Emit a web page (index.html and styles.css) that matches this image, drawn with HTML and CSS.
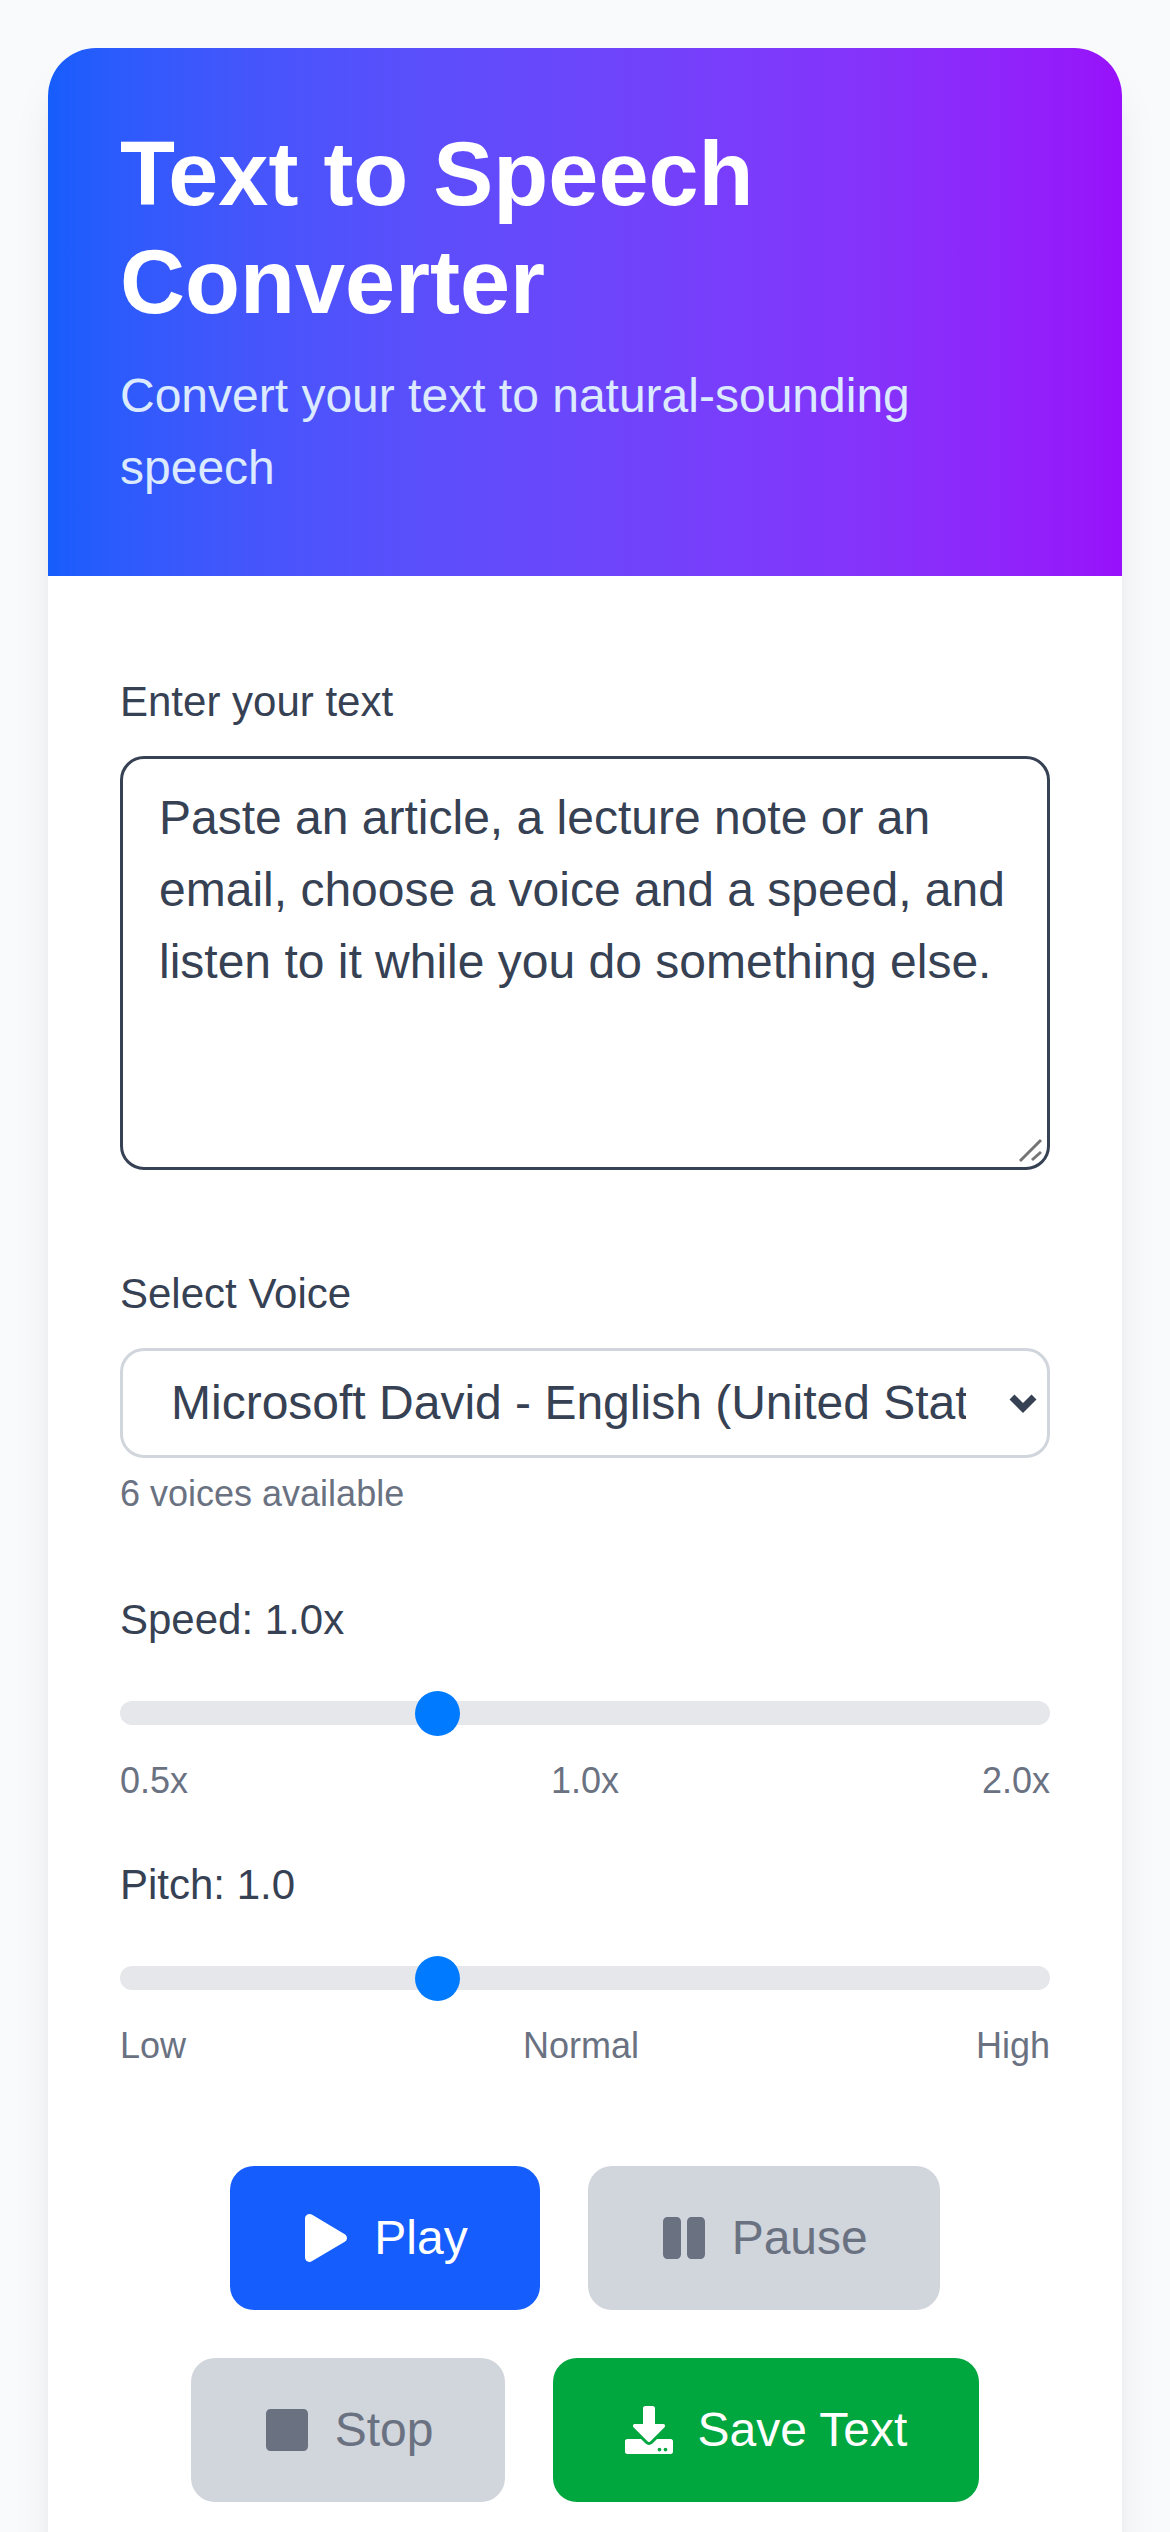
FILE: index.html
```html
<!DOCTYPE html>
<html lang="en">
<head>
    <meta charset="UTF-8">
    <meta name="viewport" content="width=device-width, initial-scale=1.0">
    <title>Text to Speech Converter</title>
    <link rel="stylesheet" href="styles.css">
</head>
<body>
    <div class="card">
        <header class="card-header">
            <h1>Text to Speech Converter</h1>
            <p>Convert your text to natural-sounding speech</p>
        </header>

        <div class="card-body">
            <label class="field-label" for="textInput">Enter your text</label>
            <div class="text-wrap">
                <textarea id="textInput" rows="5">Paste an article, a lecture note or an email, choose a voice and a speed, and listen to it while you do something else.</textarea>
                <svg class="resize-grip" viewBox="0 0 27 27">
                    <path d="M3 24L24 3M15 23L24 15" />
                </svg>
            </div>

            <label class="field-label" for="voiceSelect">Select Voice</label>
            <div class="select-wrap">
                <select id="voiceSelect">
                    <option>Microsoft David - English (United States)</option>
                </select>
                <svg class="select-arrow" viewBox="0 0 28 20">
                    <path d="M3 4L14 15L25 4" />
                </svg>
            </div>
            <div class="hint">6 voices available</div>

            <label class="field-label" for="speedRange">Speed: 1.0x</label>
            <input class="slider" type="range" id="speedRange" min="0.5" max="2" step="0.1" value="1">
            <div class="slider-labels">
                <span>0.5x</span>
                <span>1.0x</span>
                <span>2.0x</span>
            </div>

            <label class="field-label" for="pitchRange">Pitch: 1.0</label>
            <input class="slider" type="range" id="pitchRange" min="0.5" max="2" step="0.1" value="1">
            <div class="slider-labels">
                <span>Low</span>
                <span>Normal</span>
                <span>High</span>
            </div>

            <div class="button-section">
                <button class="btn btn-play" type="button">
                    <svg class="icon" viewBox="0 0 448 512"><path d="M424.4 214.7L72.4 6.6C43.8-10.3 0 6.1 0 47.9V464c0 37.5 40.7 60.1 72.4 41.3l352-208c31.4-18.5 31.5-64.1 0-82.6z"/></svg>
                    Play
                </button>
                <button class="btn btn-off" type="button">
                    <svg class="icon" viewBox="0 0 448 512"><path d="M144 479H48c-26.5 0-48-21.5-48-48V79c0-26.5 21.5-48 48-48h96c26.5 0 48 21.5 48 48v352c0 26.5-21.5 48-48 48zm304-48V79c0-26.5-21.5-48-48-48h-96c-26.5 0-48 21.5-48 48v352c0 26.5 21.5 48 48 48h96c26.5 0 48-21.5 48-48z"/></svg>
                    Pause
                </button>
                <button class="btn btn-off" type="button">
                    <svg class="icon" viewBox="0 0 448 512"><path d="M400 32H48C21.5 32 0 53.5 0 80v352c0 26.5 21.5 48 48 48h352c26.5 0 48-21.5 48-48V80c0-26.5-21.5-48-48-48z"/></svg>
                    Stop
                </button>
                <button class="btn btn-save" type="button">
                    <svg class="icon" viewBox="0 0 512 512"><path d="M216 0h80c13.3 0 24 10.7 24 24v168h87.7c17.8 0 26.7 21.5 14.1 34.1L269.7 378.3c-7.5 7.5-19.8 7.5-27.3 0L90.1 226.1c-12.6-12.6-3.7-34.1 14.1-34.1H192V24c0-13.3 10.7-24 24-24zm296 376v112c0 13.3-10.7 24-24 24H24c-13.3 0-24-10.7-24-24V376c0-13.3 10.7-24 24-24h146.7l49 49c20.1 20.1 52.5 20.1 72.6 0l49-49H488c13.3 0 24 10.7 24 24zm-124 88c0-11-9-20-20-20s-20 9-20 20 9 20 20 20 20-9 20-20zm64 0c0-11-9-20-20-20s-20 9-20 20 9 20 20 20 20-9 20-20z"/></svg>
                    Save Text
                </button>
            </div>
        </div>
    </div>
</body>
</html>
```

FILE: styles.css
```css
/* styles.css */
html, body {
    height: 100%;
    overflow: hidden;
}

body {
    font-family: "Liberation Sans", Arial, sans-serif;
    background-color: #f9fafb;
    color: #364153;
    margin: 0;
    padding: 48px;
    box-sizing: border-box;
}

.card {
    background-color: #fff;
    border-radius: 48px;
    box-shadow: 0 30px 45px -9px rgba(0,0,0,0.1), 0 12px 18px -12px rgba(0,0,0,0.1);
    overflow: hidden;
}

.card-header {
    padding: 72px;
    color: #fff;
    background: linear-gradient(to right in oklab, #155dfc, #9810fa);
}

.card-header h1 {
    font-size: 90px;
    line-height: 108px;
    font-weight: 700;
    margin: 0 0 24px;
}

.card-header p {
    font-size: 48px;
    line-height: 72px;
    color: #dbeafe;
    margin: 0;
}

.card-body {
    padding: 96px 72px;
}

.field-label {
    display: block;
    font-size: 42px;
    line-height: 60px;
    margin-bottom: 24px;
}

.text-wrap {
    position: relative;
    margin-bottom: 94px;
}

textarea {
    display: block;
    width: 100%;
    height: 414px;
    box-sizing: border-box;
    padding: 23px 36px;
    border: 3px solid #364153;
    border-radius: 24px;
    outline: none;
    resize: none;
    overflow: hidden;
    font-family: inherit;
    font-size: 48px;
    line-height: 72px;
    color: #364153;
}

.resize-grip {
    position: absolute;
    right: 6px;
    bottom: 6px;
    width: 27px;
    height: 27px;
    fill: none;
    stroke: #757575;
    stroke-width: 3;
}

.select-wrap {
    position: relative;
}

select {
    display: block;
    width: 100%;
    height: 110px;
    box-sizing: border-box;
    padding: 0 81px 2px 48px;
    border: 3px solid #d1d5dc;
    border-radius: 24px;
    background-color: #fff;
    appearance: none;
    outline: none;
    font-family: inherit;
    font-size: 48px;
    color: #364153;
}

.select-arrow {
    position: absolute;
    top: 45px;
    right: 13px;
    width: 28px;
    height: 20px;
    fill: none;
    stroke: #364153;
    stroke-width: 7;
    pointer-events: none;
}

.hint {
    margin: 12px 0 72px;
    font-size: 36px;
    line-height: 48px;
    color: #6a7282;
}

.slider {
    display: block;
    width: 100%;
    height: 24px;
    margin: 51px 0 32px;
    border-radius: 12px;
    background-color: #e5e7eb;
    appearance: none;
    outline: none;
}

.slider::-webkit-slider-thumb {
    appearance: none;
    width: 45px;
    height: 45px;
    border-radius: 50%;
    background-color: #007bff;
}

.slider-labels {
    display: flex;
    justify-content: space-between;
    margin-bottom: 50px;
    font-size: 36px;
    line-height: 48px;
    color: #6a7282;
}

.button-section {
    display: flex;
    flex-wrap: wrap;
    justify-content: center;
    gap: 48px;
    margin-top: 96px;
}

.btn {
    display: flex;
    align-items: center;
    padding: 36px 72px;
    border: none;
    border-radius: 24px;
    font-family: inherit;
    font-size: 48px;
    line-height: 72px;
    cursor: pointer;
}

.btn-play {
    background-color: #155dfc;
    color: #fff;
}

.btn-save {
    background-color: #00a63e;
    color: #fff;
}

.btn-off {
    background-color: #d1d5dc;
    color: #6a7282;
}

.icon {
    width: 48px;
    height: 48px;
    margin-right: 24px;
    fill: currentColor;
}
```
